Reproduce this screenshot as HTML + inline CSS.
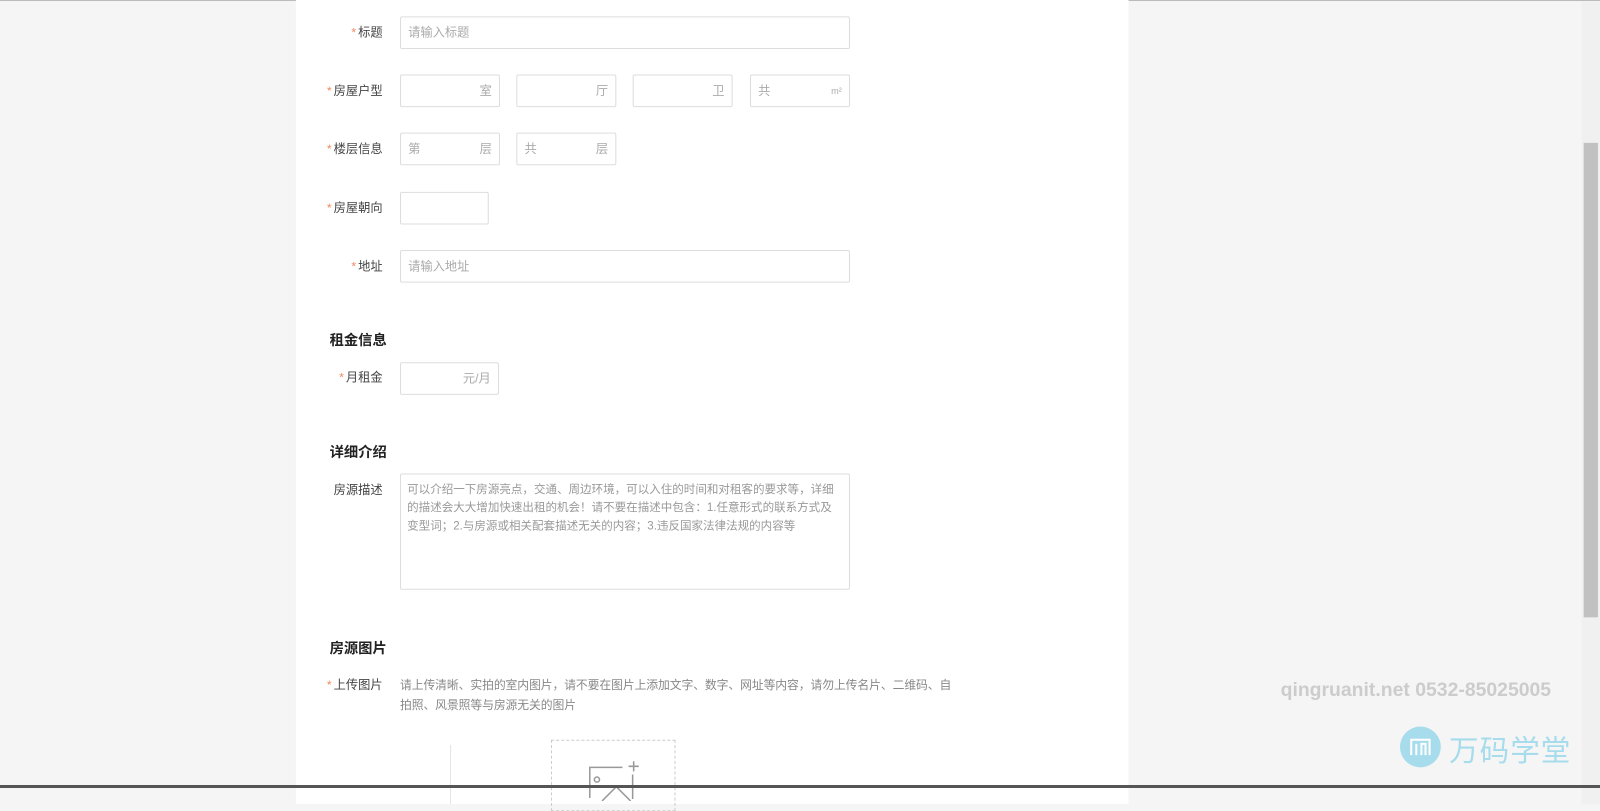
<!DOCTYPE html>
<html><head><meta charset="utf-8"><style>
*{margin:0;padding:0;box-sizing:border-box}
body{width:1600px;height:788px;background:#f5f5f5;position:relative;overflow:hidden;font-family:"Liberation Sans","Noto Sans CJK SC",sans-serif;font-size:12px;color:#333}
#w{position:absolute;left:0;top:0;width:1568px;height:772px;transform:scale(1.0204);transform-origin:0 0}
.a{position:absolute}
.main{left:290px;top:0;width:816px;height:788px;background:#fff}
.lbl{position:absolute;width:90px;left:285px;text-align:right;font-size:12px;color:#444;line-height:16px}
.lbl i{font-style:normal;color:#f08a5d;margin-right:2px}
.in{position:absolute;border:1px solid #ddd;border-radius:2px;background:#fff;height:32px;color:#aaa;font-size:12px;line-height:30px;padding:0 7px}
.in span{position:absolute;right:7px;top:0}
.h{position:absolute;left:323px;font-size:14px;font-weight:bold;color:#222}
</style></head><body>
<div id="w">
<div class="a" style="left:0;top:0;width:1568px;height:1px;background:#bbb"></div>
<div class="a main"></div>

<div class="lbl" style="top:24px"><i>*</i>标题</div>
<div class="in" style="left:392px;top:16px;width:441px">请输入标题</div>

<div class="lbl" style="top:81px"><i>*</i>房屋户型</div>
<div class="in" style="left:392px;top:73px;width:98px"><span>室</span></div>
<div class="in" style="left:506px;top:73px;width:98px"><span>厅</span></div>
<div class="in" style="left:620px;top:73px;width:98px"><span>卫</span></div>
<div class="in" style="left:735px;top:73px;width:98px">共<span style="font-size:9px">m²</span></div>

<div class="lbl" style="top:138px"><i>*</i>楼层信息</div>
<div class="in" style="left:392px;top:130px;width:98px">第<span>层</span></div>
<div class="in" style="left:506px;top:130px;width:98px">共<span>层</span></div>

<div class="lbl" style="top:196px"><i>*</i>房屋朝向</div>
<div class="in" style="left:392px;top:188px;width:87px"></div>

<div class="lbl" style="top:253px"><i>*</i>地址</div>
<div class="in" style="left:392px;top:245px;width:441px">请输入地址</div>

<div class="h" style="top:323px">租金信息</div>
<div class="lbl" style="top:362px"><i>*</i>月租金</div>
<div class="in" style="left:392px;top:355px;width:97px"><span>元/月</span></div>

<div class="h" style="top:433px">详细介绍</div>
<div class="lbl" style="top:472px">房源描述</div>
<div class="in" style="left:392px;top:464px;width:441px;height:114px;line-height:18px;padding:6px 6px;color:#999;font-size:11.3px;white-space:nowrap">可以介绍一下房源亮点，交通、周边环境，可以入住的时间和对租客的要求等，详细<br>的描述会大大增加快速出租的机会！请不要在描述中包含：1.任意形式的联系方式及<br>变型词；2.与房源或相关配套描述无关的内容；3.违反国家法律法规的内容等</div>

<div class="h" style="top:625px">房源图片</div>
<div class="lbl" style="top:663px"><i>*</i>上传图片</div>
<div class="a" style="left:392px;top:662px;width:560px;line-height:20px;color:#888;font-size:11.6px;letter-spacing:-0.1px;white-space:nowrap">请上传清晰、实拍的室内图片，请不要在图片上添加文字、数字、网址等内容，请勿上传名片、二维码、自<br>拍照、风景照等与房源无关的图片</div>
<div class="a" style="left:441px;top:730px;width:1px;height:58px;background:#e5e5e5"></div>
<div class="a" style="left:540px;top:725px;width:122px;height:70px;border:1px dashed #ccc"></div>
<svg class="a" style="left:574px;top:745px" width="56" height="40" viewBox="0 0 56 40"><g fill="none" stroke="#999" stroke-width="1.5"><path d="M36 7H4v30M46 14v24"/><circle cx="11" cy="19" r="2.5"/><path d="M16 40l14-14 14 14"/><path d="M47 1v10M42 6h10"/></g></svg>

<div class="a" style="left:1255px;top:666px;font-size:19px;font-weight:bold;color:#ccc;white-space:nowrap">qingruanit.net 0532-85025005</div>
<div class="a" style="left:1372px;top:712px;width:40px;height:40px;border-radius:50%;background:#a6dcec"></div>
<svg class="a" style="left:1380px;top:720px" width="24" height="24" viewBox="0 0 24 24"><path d="M3 20V5h18v15M8 20V9M13 20V9h4v11" fill="none" stroke="#fff" stroke-width="2"/></svg>
<div class="a" style="left:1420px;top:713px;font-size:29px;color:#a6dcec;letter-spacing:1px">万码学堂</div>

<div class="a" style="left:1550px;top:1px;width:18px;height:787px;background:#f0f0f0"></div>
<div class="a" style="left:1552px;top:140px;width:14px;height:465px;background:#c1c1c1"></div>
</div>
<div class="a" style="left:0;top:785px;width:1600px;height:3px;background:#555"></div>
</body></html>
